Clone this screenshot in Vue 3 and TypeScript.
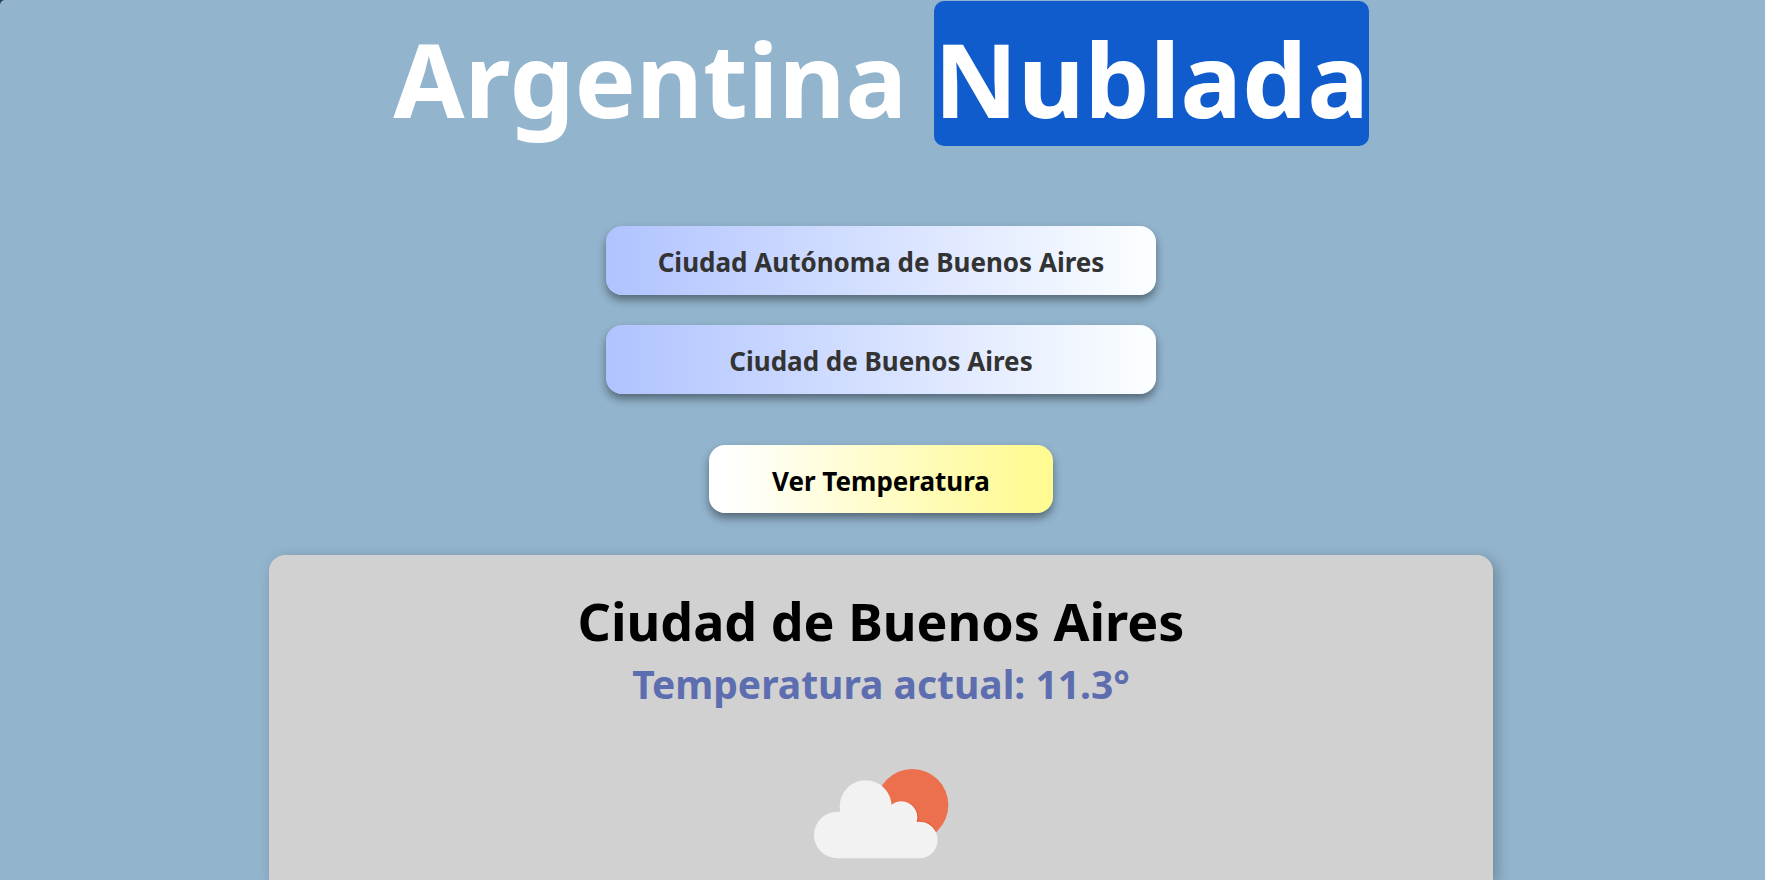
<script setup lang="ts">
import { computed, ref } from 'vue'

interface City {
  name: string
  temperature: number
}

const provinces: string[] = ['Ciudad Autónoma de Buenos Aires']
const cities: City[] = [{ name: 'Ciudad de Buenos Aires', temperature: 11.3 }]

const province = ref(provinces[0])
const cityName = ref(cities[0].name)
const shown = ref<City>(cities[0])
const selected = computed(() => cities.find((c) => c.name === cityName.value) ?? cities[0])

function showTemperature(): void {
  shown.value = selected.value
}
</script>

<template>
  <main class="page">
    <h1 class="title">Argentina <span class="mark">Nublada</span></h1>

    <form class="form" @submit.prevent="showTemperature">
      <select v-model="province" class="control picker" aria-label="Provincia">
        <option v-for="p in provinces" :key="p" :value="p">{{ p }}</option>
      </select>
      <select v-model="cityName" class="control picker" aria-label="Ciudad">
        <option v-for="c in cities" :key="c.name" :value="c.name">{{ c.name }}</option>
      </select>
      <button type="submit" class="control submit">Ver Temperatura</button>
    </form>

    <section class="card">
      <h2 class="city">{{ shown.name }}</h2>
      <p class="temperature">Temperatura actual: {{ shown.temperature }}°</p>
      <svg class="weather" viewBox="72 54 408 273" role="img" aria-label="Parcialmente nublado">
        <circle cx="370" cy="165" r="108" fill="#ec704d" />
        <g fill="none" stroke="#e65a38" stroke-width="5">
          <path d="M307 166A49 49 0 0 1 386 214A55 55 0 0 1 441 246" />
        </g>
        <g fill="#f2f2f2">
          <circle cx="230" cy="169" r="78" />
          <circle cx="145" cy="255" r="70" />
          <circle cx="337" cy="202" r="48" />
          <circle cx="391" cy="270" r="55" />
          <path d="M145 190L230 130L337 190L391 250V325H145Z" />
        </g>
      </svg>
    </section>
  </main>
</template>

<style>
body {
  margin: 0;
  background: #2b3942;
}
</style>

<style scoped>
.page {
  box-sizing: border-box;
  display: flex;
  flex-direction: column;
  align-items: center;
  min-height: 100vh;
  padding: 1px 3px 0 0;
  overflow: hidden;
  border-top-left-radius: 5px;
  background: #92b4cd;
  font-family: 'Segoe UI', 'Noto Sans', 'Open Sans', sans-serif;
}

.title {
  margin: 0;
  color: #fff;
  font-size: 103px;
  font-weight: 700;
  line-height: 135px;
  text-align: center;
}

.mark {
  display: inline-block;
  padding-top: 10px;
  border-radius: 10px;
  background: #115ccd;
}

.form {
  display: flex;
  flex-direction: column;
  align-items: center;
  width: 100%;
  margin-top: 80px;
}

.control {
  box-sizing: border-box;
  height: 69px;
  margin: 0;
  padding: 3px 10px 0;
  border: 0;
  border-radius: 16px;
  box-shadow: 0 5px 9px rgba(0, 0, 0, 0.42);
  font-family: inherit;
  font-size: 26px;
  font-weight: 700;
  text-align: center;
  cursor: pointer;
}

.picker {
  appearance: none;
  width: 550px;
  max-width: 90%;
  margin-bottom: 30px;
  background: linear-gradient(to right, #b0c3ff, #fcffff);
  color: #333;
  text-align-last: center;
}

.submit {
  width: 344px;
  max-width: 90%;
  height: 68px;
  margin-top: 21px;
  background: linear-gradient(to right, #fff 5%, #fffa91 95%);
  color: #000;
}

.card {
  box-sizing: border-box;
  display: flex;
  flex: 1;
  flex-direction: column;
  align-items: center;
  width: 69.5%;
  margin-top: 42px;
  padding: 30px 20px 20px;
  border-radius: 16px 16px 0 0;
  background: #d1d1d1;
  box-shadow: 4px 4px 14px rgba(0, 0, 0, 0.25);
  text-align: center;
}

.city {
  margin: 0;
  color: #000;
  font-size: 52px;
  line-height: 72px;
}

.temperature {
  margin: 0;
  color: #5c6db0;
  font-size: 39px;
  font-weight: 700;
  line-height: 54px;
}

.weather {
  width: 136px;
  height: 91px;
  margin-top: 57px;
}
</style>
